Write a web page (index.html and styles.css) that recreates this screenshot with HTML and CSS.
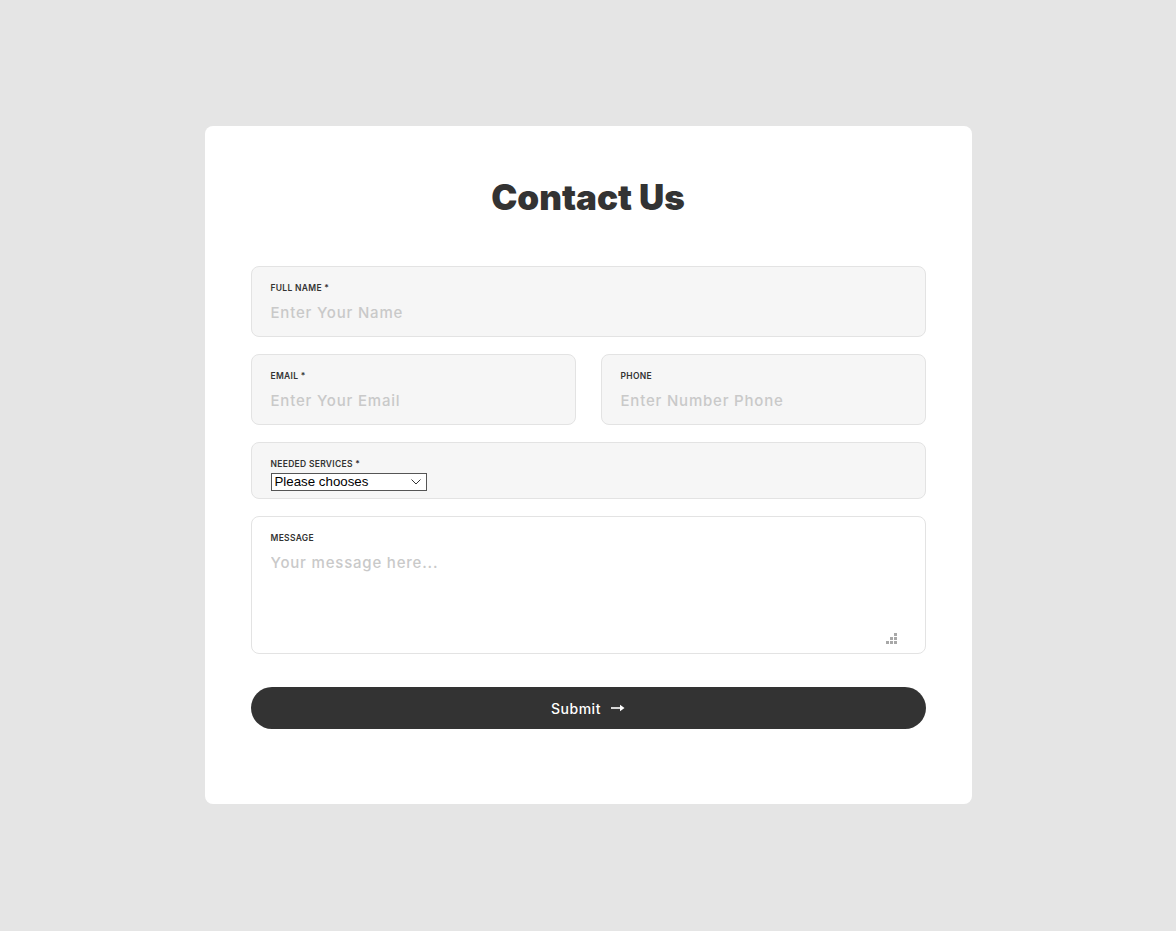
FILE: index.html
```html
<!DOCTYPE html>
<html lang="en">
<head>
    <meta charset="UTF-8">
    <meta name="viewport" content="width=device-width, initial-scale=1.0">
    <title>Contact Us</title>
    <link rel="stylesheet" href="styles.css">
</head>
<body>
    <div class="wrapper">
        <form class="card">
            <h1 class="title">Contact Us</h1>

            <div class="field">
                <label for="name">Full Name *</label>
                <input id="name" type="text" placeholder="Enter Your Name">
            </div>

            <div class="row">
                <div class="field">
                    <label for="email">Email *</label>
                    <input id="email" type="email" placeholder="Enter Your Email">
                </div>
                <div class="field">
                    <label for="phone">Phone</label>
                    <input id="phone" type="text" placeholder="Enter Number Phone">
                </div>
            </div>

            <div class="field field-select">
                <label for="service">Needed Services *</label>
                <select id="service">
                    <option>Please chooses</option>
                </select>
            </div>

            <div class="field field-message">
                <label for="message">Message</label>
                <textarea id="message" placeholder="Your message here..."></textarea>
            </div>

            <button type="button" class="submit">
                Submit
                <svg width="14" height="8" viewBox="0 0 14 8">
                    <path d="M0 4h11" stroke="#fff" stroke-width="1.6"/>
                    <path d="M9 0.8L13.5 4L9 7.2z" fill="#fff"/>
                </svg>
            </button>
        </form>
    </div>
</body>
</html>
```

FILE: styles.css
```css
html,
body {
    margin: 0;
    padding: 0;
    background: #e5e5e5;
    font-family: Inter, 'DejaVu Sans', sans-serif;
    color: #333;
}

.wrapper {
    display: flex;
    justify-content: center;
    padding-top: 126px;
}

.card {
    width: 767px;
    box-sizing: border-box;
    background: #fff;
    border-radius: 8px;
    padding: 50px 46px 75px;
    display: flex;
    flex-direction: column;
    gap: 17px;
}

.title {
    margin: 0 0 31px;
    text-align: center;
    font-size: 35px;
    font-weight: 900;
    line-height: 42px;
    color: #333;
}

.row {
    display: flex;
    gap: 25px;
}

.row .field {
    flex: 1;
}

.field {
    background: #f6f6f6;
    border: 1px solid #e3e3e3;
    border-radius: 8px;
    padding: 15px 18px 13px 19px;
    display: flex;
    flex-direction: column;
}

.field label {
    font-size: 8.5px;
    font-weight: 600;
    letter-spacing: 0.3px;
    text-transform: uppercase;
    color: #333;
    line-height: 12px;
    margin-bottom: 9px;
}

.field input,
.field textarea {
    border: none;
    outline: none;
    background: transparent;
    padding: 0;
    font-family: inherit;
    font-size: 15px;
    font-weight: 500;
    letter-spacing: 0.8px;
    line-height: 20px;
    color: #333;
}

.field input::placeholder,
.field textarea::placeholder {
    color: #c9c9c9;
}

.field-select {
    padding-bottom: 7px;
}

.field-select label {
    margin-bottom: 3px;
}

.field-select select {
    appearance: none;
    width: 156px;
    height: 18px;
    border: 1px solid #555;
    border-radius: 0;
    background: #fff url("data:image/svg+xml,%3Csvg xmlns='http://www.w3.org/2000/svg' width='10' height='6' viewBox='0 0 10 6'%3E%3Cpath d='M0.5 0.5L5 5L9.5 0.5' fill='none' stroke='%23333' stroke-width='1'/%3E%3C/svg%3E") no-repeat right 5px center;
    font-family: 'Liberation Sans', Arial, sans-serif;
    font-size: 13.3px;
    line-height: 16px;
    padding: 0 3px;
    color: #000;
}

.field-message {
    background: #fff;
    padding-bottom: 9px;
}

.field-message textarea {
    height: 91px;
    margin-right: 10px;
    resize: none;
    background: url("data:image/svg+xml,%3Csvg xmlns='http://www.w3.org/2000/svg' width='11' height='11' viewBox='0 0 11 11' fill='%23a8a8a8'%3E%3Crect x='8' y='0' width='3' height='3'/%3E%3Crect x='4' y='4' width='3' height='3'/%3E%3Crect x='8' y='4' width='3' height='3'/%3E%3Crect x='0' y='8' width='3' height='3'/%3E%3Crect x='4' y='8' width='3' height='3'/%3E%3Crect x='8' y='8' width='3' height='3'/%3E%3C/svg%3E") no-repeat right bottom;
}

.submit {
    margin-top: 16px;
    height: 42px;
    border: none;
    border-radius: 21px;
    background: #333;
    color: #fff;
    font-family: inherit;
    font-size: 14px;
    font-weight: 500;
    letter-spacing: 0.5px;
    display: flex;
    align-items: center;
    justify-content: center;
    gap: 10px;
    cursor: pointer;
}
```
